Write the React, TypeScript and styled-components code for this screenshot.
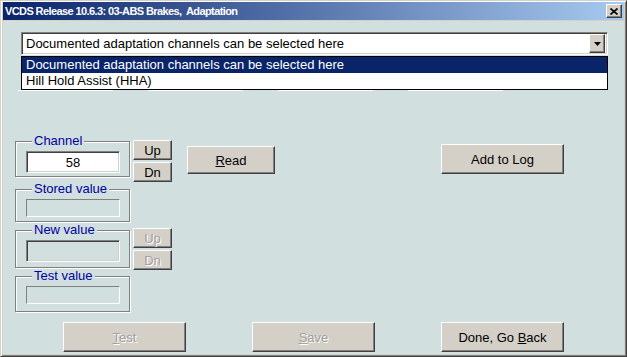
import React from 'react';
import styled, { createGlobalStyle } from 'styled-components';

const FACE = '#d4d0c8';
const BG = '#d1dfdf';
const LABEL = '#0000a0';

const GlobalStyle = createGlobalStyle`
  html, body { margin: 0; padding: 0; background: ${FACE}; }
  body { font-family: 'Liberation Sans', Arial, sans-serif; font-size: 13px; }
`;

const Window = styled.div`
  box-sizing: border-box;
  width: 627px;
  height: 357px;
  display: flex;
  flex-direction: column;
  background: ${FACE};
  border-style: solid;
  border-width: 1px;
  border-color: ${FACE} #404040 #404040 ${FACE};
  box-shadow: inset 1px 1px 0 #fff, inset -1px -1px 0 #808080;
  padding: 1px 2px 2px 2px;
`;

const TitleBar = styled.div`
  flex-shrink: 0;
  height: 18px;
  margin-bottom: 1px;
  display: flex;
  align-items: center;
  justify-content: space-between;
  padding: 0 2px 0 2px;
  background: linear-gradient(to right, #0a246a, #a6caf0);
  color: #fff;
  font: bold 11px 'Liberation Sans', Arial, sans-serif;
  letter-spacing: -0.6px;
  white-space: pre;
`;

const raised = `
  background: ${FACE};
  border-style: solid;
  border-width: 1px;
  border-color: #fff #404040 #404040 #fff;
  box-shadow: inset -1px -1px 0 #808080;
`;

const CloseBox = styled.div`
  box-sizing: border-box;
  width: 16px;
  height: 14px;
  display: flex;
  align-items: center;
  justify-content: center;
  ${raised}
`;

const Body = styled.div`
  flex: 1;
  min-height: 0;
  background: ${BG};
  display: flex;
  flex-direction: column;
  padding: 11px 16px 0 12px;
`;

const ComboWrap = styled.div`
  position: relative;
  margin-left: 6px;
  width: 587px;
`;

const sunken = `
  border-style: solid;
  border-width: 1px;
  border-color: #808080 #fff #fff #808080;
  box-shadow: inset 1px 1px 0 #404040, inset -1px -1px 0 ${FACE};
`;

const Combo = styled.div`
  box-sizing: border-box;
  height: 23px;
  display: flex;
  align-items: center;
  padding: 0 2px 0 4px;
  background: #fff;
  ${sunken}
`;

const ComboText = styled.span`
  flex: 1;
  white-space: nowrap;
`;

const ArrowBtn = styled.div`
  box-sizing: border-box;
  width: 16px;
  height: 19px;
  display: flex;
  align-items: center;
  justify-content: center;
  ${raised}
`;

const DropList = styled.ul`
  position: absolute;
  top: 24px;
  left: 0;
  box-sizing: border-box;
  width: 587px;
  height: 34px;
  margin: 0;
  padding: 0;
  list-style: none;
  background: #fff;
  border: 1px solid #000;
  z-index: 2;
`;

const Option = styled.li<{ $selected?: boolean }>`
  height: 16px;
  line-height: 16px;
  padding-left: 4px;
  white-space: nowrap;
  background: ${p => (p.$selected ? '#0a246a' : '#fff')};
  color: ${p => (p.$selected ? '#fff' : '#000')};
`;

const ReadoutRow = styled.div`
  display: flex;
  gap: 35px;
  margin: 3px 0 0 3px;
`;

const Readout = styled.div`
  box-sizing: border-box;
  width: 95px;
  height: 33px;
  border-bottom: 1px solid #fff;
`;

const Main = styled.div`
  display: flex;
  align-items: flex-start;
  margin-top: 43px;
`;

const LeftCol = styled.div`
  display: flex;
  flex-direction: column;
`;

const GroupRow = styled.div<{ $mt: number; $h: number }>`
  display: flex;
  align-items: flex-start;
  gap: 3px;
  height: ${p => p.$h}px;
  margin-top: ${p => p.$mt}px;
`;

const Group = styled.fieldset`
  box-sizing: border-box;
  width: 115px;
  height: 100%;
  min-width: 0;
  margin: 0;
  padding: 3px 0 0 10px;
  border: 1px solid #808080;
  box-shadow: 1px 1px 0 #fff, inset 1px 1px 0 #fff;
`;

const Legend = styled.legend`
  margin-left: 6px;
  padding: 0 2px;
  line-height: 14px;
  font-size: 13px;
  color: ${LABEL};
  background: ${BG};
`;

const Field = styled.div<{ $kind: 'white' | 'sunk' | 'flat' }>`
  box-sizing: border-box;
  width: 94px;
  height: ${p => (p.$kind === 'flat' ? 18 : 22)}px;
  display: flex;
  align-items: center;
  justify-content: center;
  background: ${p => (p.$kind === 'white' ? '#fff' : BG)};
  ${p =>
    p.$kind === 'flat'
      ? `border-style: solid; border-width: 1px; border-color: #808080 #fff #fff #808080;`
      : sunken}
`;

const Spin = styled.div<{ $mt: number }>`
  display: flex;
  flex-direction: column;
  gap: 2px;
  margin-top: ${p => p.$mt}px;
`;

const Btn = styled.button<{ $w: number; $h: number; $ml?: number; $mt?: number }>`
  box-sizing: border-box;
  flex-shrink: 0;
  width: ${p => p.$w}px;
  height: ${p => p.$h}px;
  margin: ${p => p.$mt || 0}px 0 0 ${p => p.$ml || 0}px;
  padding: 0;
  ${raised}
  font-family: 'Liberation Sans', Arial, sans-serif;
  font-size: 13px;
  color: #000;
  &:disabled {
    color: #a0a0a0;
    text-shadow: 1px 1px 0 #fff;
  }
`;

const Footer = styled.div`
  display: flex;
  gap: 66px;
  margin: 10px 0 0 48px;
`;

const App: React.FC = () => {
  return (
    <>
      <GlobalStyle />
      <Window>
        <TitleBar>
          <span>VCDS Release 10.6.3: 03-ABS Brakes,  Adaptation</span>
          <CloseBox>
            <svg width="8" height="7" viewBox="0 0 8 7">
              <path d="M0.5 0.5 L7.5 6.5 M7.5 0.5 L0.5 6.5" stroke="#000" strokeWidth="1.6" />
            </svg>
          </CloseBox>
        </TitleBar>
        <Body>
          <ComboWrap>
            <Combo>
              <ComboText>Documented adaptation channels can be selected here</ComboText>
              <ArrowBtn>
                <svg width="7" height="4" viewBox="0 0 7 4">
                  <path d="M0 0 H7 L3.5 4 Z" fill="#000" />
                </svg>
              </ArrowBtn>
            </Combo>
            <DropList>
              <Option $selected>Documented adaptation channels can be selected here</Option>
              <Option>Hill Hold Assist (HHA)</Option>
            </DropList>
          </ComboWrap>
          <ReadoutRow>
            <Readout />
            <Readout />
            <Readout />
            <Readout />
          </ReadoutRow>
          <Main>
            <LeftCol>
              <GroupRow $mt={0} $h={43}>
                <Group>
                  <Legend>Channel</Legend>
                  <Field $kind="white">58</Field>
                </Group>
                <Spin $mt={6}>
                  <Btn $w={39} $h={20}>Up</Btn>
                  <Btn $w={39} $h={20}>Dn</Btn>
                </Spin>
              </GroupRow>
              <GroupRow $mt={5} $h={40}>
                <Group>
                  <Legend>Stored value</Legend>
                  <Field $kind="flat" />
                </Group>
              </GroupRow>
              <GroupRow $mt={1} $h={45}>
                <Group>
                  <Legend>New value</Legend>
                  <Field $kind="sunk" />
                </Group>
                <Spin $mt={5}>
                  <Btn $w={39} $h={20} disabled>Up</Btn>
                  <Btn $w={39} $h={20} disabled>Dn</Btn>
                </Spin>
              </GroupRow>
              <GroupRow $mt={1} $h={43}>
                <Group>
                  <Legend>Test value</Legend>
                  <Field $kind="flat" />
                </Group>
              </GroupRow>
            </LeftCol>
            <Btn $w={88} $h={28} $ml={15} $mt={12}>
              <u>R</u>ead
            </Btn>
            <Btn $w={123} $h={30} $ml={166} $mt={10}>
              Add to Log
            </Btn>
          </Main>
          <Footer>
            <Btn $w={123} $h={30} disabled>
              <u>T</u>est
            </Btn>
            <Btn $w={123} $h={30} disabled>
              <u>S</u>ave
            </Btn>
            <Btn $w={123} $h={30}>
              Done, Go <u>B</u>ack
            </Btn>
          </Footer>
        </Body>
      </Window>
    </>
  );
};

export default App;
